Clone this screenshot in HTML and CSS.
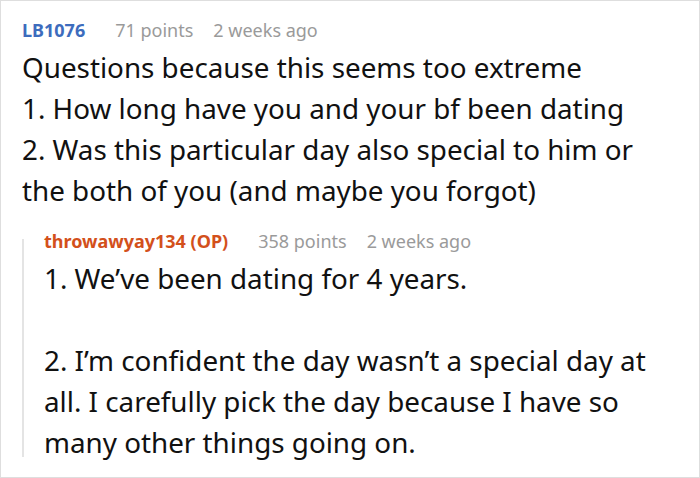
FILE: index.html
```html
<!DOCTYPE html>
<html>
<head>
<meta charset="utf-8">
<link rel="stylesheet" href="styles.css">
</head>
<body>
<div class="frame">
  <div class="comment">
    <div class="meta">
      <span class="author author-blue">LB1076</span>
      <span class="info">71 points</span>
      <span class="info">2 weeks ago</span>
    </div>
    <div class="body">
      <p>Questions because this seems too extreme<br>1. How long have you and your bf been dating<br>2. Was this particular day also special to him or the both of you (and maybe you forgot)</p>
    </div>
    <div class="reply">
      <div class="rail"></div>
      <div class="reply-content">
        <div class="meta">
          <span class="author author-op">throwawyay134 (OP)</span>
          <span class="info">358 points</span>
          <span class="info">2 weeks ago</span>
        </div>
        <div class="body">
          <p>1. We’ve been dating for 4 years.</p>
          <p>2. I’m confident the day wasn’t a special day at all. I carefully pick the day because I have so many other things going on.</p>
        </div>
      </div>
    </div>
  </div>
</div>
</body>
</html>
```

FILE: styles.css
```css
html, body {
  margin: 0;
  padding: 0;
  background: #ffffff;
}
.frame {
  box-sizing: border-box;
  width: 700px;
  height: 478px;
  border: 1px solid #dedede;
  overflow: hidden;
  font-family: "Noto Sans", "Open Sans", sans-serif;
  color: #111;
}
.comment {
  padding: 17px 30px 0 21px;
}
.meta {
  display: flex;
  font-size: 18px;
  line-height: 24px;
}
.author {
  font-weight: bold;
  margin-right: 30px;
}
.info + .info {
  margin-left: 20px;
}
.author-blue { color: #3d6cbd; }
.author-op { color: #d3501b; }
.info { color: #9a9a9a; }
.body {
  margin-top: 5px;
  font-size: 27.8px;
  line-height: 41px;
}
.body p {
  margin: 0;
}
.body p + p {
  margin-top: 41px;
}
.reply {
  display: flex;
  margin-top: 18px;
}
.rail {
  flex: 0 0 2px;
  background: #e4e4e4;
  margin: 10px 0 6px;
}
.reply-content {
  flex: 1;
  padding-left: 20px;
}
```
